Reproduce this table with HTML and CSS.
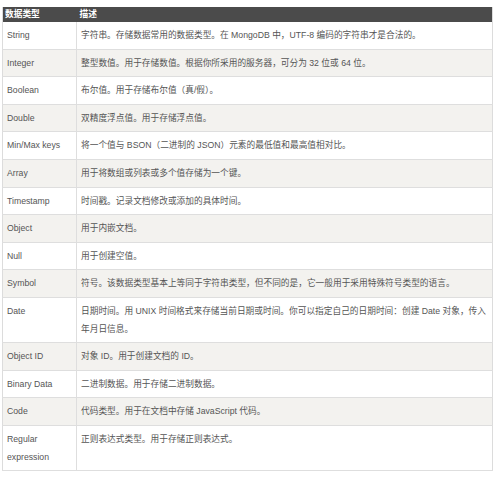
FILE: index.html
```html
<!DOCTYPE html>
<html lang="zh">
<head>
<meta charset="utf-8">
<link rel="stylesheet" href="styles.css">
</head>
<body>
<table class="types">
  <thead>
    <tr><th class="c1">数据类型</th><th class="c2">描述</th></tr>
  </thead>
  <tbody>
    <tr><td class="c1">String</td><td>字符串。存储数据常用的数据类型。在 MongoDB 中，UTF-8 编码的字符串才是合法的。</td></tr>
    <tr><td class="c1">Integer</td><td>整型数值。用于存储数值。根据你所采用的服务器，可分为 32 位或 64 位。</td></tr>
    <tr><td class="c1">Boolean</td><td>布尔值。用于存储布尔值（真/假）。</td></tr>
    <tr><td class="c1">Double</td><td>双精度浮点值。用于存储浮点值。</td></tr>
    <tr><td class="c1">Min/Max keys</td><td>将一个值与 BSON（二进制的 JSON）元素的最低值和最高值相对比。</td></tr>
    <tr><td class="c1">Array</td><td>用于将数组或列表或多个值存储为一个键。</td></tr>
    <tr><td class="c1">Timestamp</td><td>时间戳。记录文档修改或添加的具体时间。</td></tr>
    <tr><td class="c1">Object</td><td>用于内嵌文档。</td></tr>
    <tr><td class="c1">Null</td><td>用于创建空值。</td></tr>
    <tr><td class="c1">Symbol</td><td>符号。该数据类型基本上等同于字符串类型，但不同的是，它一般用于采用特殊符号类型的语言。</td></tr>
    <tr><td class="c1">Date</td><td>日期时间。用 UNIX 时间格式来存储当前日期或时间。你可以指定自己的日期时间：创建 Date 对象，传入年月日信息。</td></tr>
    <tr><td class="c1">Object ID</td><td>对象 ID。用于创建文档的 ID。</td></tr>
    <tr><td class="c1">Binary Data</td><td>二进制数据。用于存储二进制数据。</td></tr>
    <tr><td class="c1">Code</td><td>代码类型。用于在文档中存储 JavaScript 代码。</td></tr>
    <tr><td class="c1">Regular expression</td><td>正则表达式类型。用于存储正则表达式。</td></tr>
  </tbody>
</table>
</body>
</html>
```
FILE: styles.css
```css
html, body {
  margin: 0;
  padding: 0;
  background: #ffffff;
}
body {
  padding: 7px 0 0 2px;
  font-family: "Liberation Sans", "Noto Sans CJK SC", sans-serif;
  font-size: 8.7px;
  color: #555555;
}
.types {
  border-collapse: collapse;
  width: 491px;
  table-layout: fixed;
  border-left: 1px solid #dcdcdc;
  border-right: 1px solid #dcdcdc;
  border-bottom: 1px solid #dedede;
}
.types th {
  background: #4b4b4b;
  color: #ffffff;
  font-weight: bold;
  text-align: left;
  height: 15px;
  line-height: 15px;
  padding: 0 2px;
  font-size: 8.7px;
}
.types th.c2 {
  padding-left: 3px;
}
.types .c1 {
  width: 74px;
  box-sizing: border-box;
}
.types td {
  padding: 5px 4px 4px 4px;
  line-height: 17.6px;
  vertical-align: top;
  border-bottom: 1px solid #dedede;
}
.types td.c1 {
  border-right: 1px solid #dedede;
}
.types tbody tr:nth-child(even) td {
  background: #f3f2ef;
}
```
